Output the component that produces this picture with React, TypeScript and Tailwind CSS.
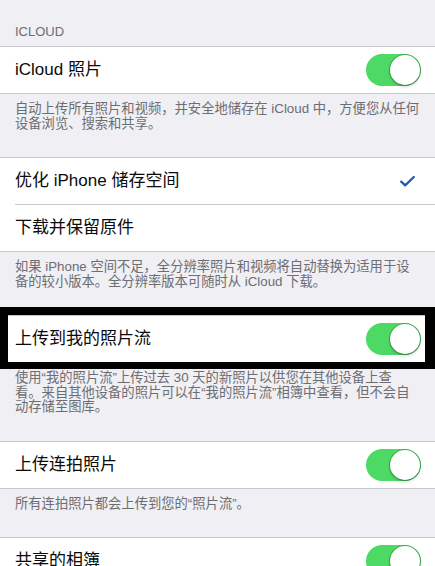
import React from 'react';

const font = { fontFamily: '"Liberation Sans", "Noto Sans CJK SC", sans-serif' };

const Toggle: React.FC = () => (
  <div className="mr-[14px] flex h-[32px] w-[55px] items-center justify-end rounded-full bg-[#4cd964] p-[1px]">
    <div className="h-[30px] w-[30px] rounded-full bg-white shadow-[0_0_0_1px_rgba(0,0,0,0.22),0_2px_3px_rgba(0,0,0,0.18)]" />
  </div>
);

const Check: React.FC = () => (
  <svg width="15" height="11" viewBox="0 0 15 11" className="mr-[20px]">
    <path d="M1.2 5.6 L5.2 9.4 L13.8 1" fill="none" stroke="#1f56b8" strokeWidth="2.2" strokeLinecap="round" strokeLinejoin="round" />
  </svg>
);

const Row: React.FC<{ label: string; right?: React.ReactNode }> = ({ label, right }) => (
  <div className="flex h-[46px] items-center justify-between bg-white">
    <span className="pl-[15px] text-[17px] leading-[22px] text-[#0a0a0a]">{label}</span>
    {right}
  </div>
);

const Footer: React.FC<{ lines: string[] }> = ({ lines }) => (
  <div className="px-[15px] pb-[26px] pt-[8px] text-[13.3px] leading-[14.5px] text-[#6d6d72]">
    {lines.map((l, i) => (
      <span key={i} className="block whitespace-nowrap">{l}</span>
    ))}
  </div>
);

export default function App() {
  return (
    <div className="h-[566px] w-[435px] overflow-hidden bg-[#efeff4]" style={font}>
      {/* Header */}
      <div className="px-[15px] pb-[6px] pt-[24px] text-[13px] leading-[16px] text-[#6d6d72]">ICLOUD</div>

      {/* iCloud 照片 */}
      <div className="border-y border-[#c8c7cc]">
        <Row label="iCloud 照片" right={<Toggle />} />
      </div>
      <Footer
        lines={[
          '自动上传所有照片和视频，并安全地储存在 iCloud 中，方便您从任何',
          '设备浏览、搜索和共享。',
        ]}
      />

      {/* 储存 */}
      <div className="border-y border-[#c8c7cc] bg-white">
        <Row label="优化 iPhone 储存空间" right={<Check />} />
        <div className="ml-[15px] h-px bg-[#c8c7cc]" />
        <Row label="下载并保留原件" />
      </div>
      <Footer
        lines={[
          '如果 iPhone 空间不足，全分辨率照片和视频将自动替换为适用于设',
          '备的较小版本。全分辨率版本可随时从 iCloud 下载。',
        ]}
      />

      {/* 我的照片流 (highlighted) */}
      <div className="relative border-y border-[#c8c7cc]">
        <Row label="上传到我的照片流" right={<Toggle />} />
        <div className="pointer-events-none absolute -bottom-[7px] -top-[9px] left-0 right-0 border-b-[7px] border-l-[8px] border-r-[10px] border-t-[8px] border-black" />
      </div>
      <Footer
        lines={[
          '使用“我的照片流”上传过去 30 天的新照片以供您在其他设备上查',
          '看。来自其他设备的照片可以在“我的照片流”相簿中查看，但不会自',
          '动存储至图库。',
        ]}
      />

      {/* 连拍 */}
      <div className="border-y border-[#c8c7cc]">
        <Row label="上传连拍照片" right={<Toggle />} />
      </div>
      <Footer lines={['所有连拍照片都会上传到您的“照片流”。']} />

      {/* 共享的相簿 */}
      <div className="border-y border-[#c8c7cc]">
        <Row label="共享的相簿" right={<Toggle />} />
      </div>
    </div>
  );
}
